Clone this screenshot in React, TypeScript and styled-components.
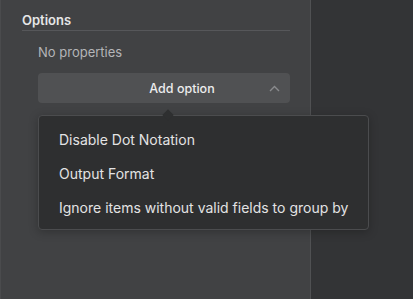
import styled, { createGlobalStyle } from "styled-components";

const GlobalStyle = createGlobalStyle`
  html, body {
    margin: 0;
    padding: 0;
    background: #333436;
  }
  body {
    font-family: Inter, "Open Sans", sans-serif;
    -webkit-font-smoothing: antialiased;
  }
`;

const Screen = styled.div`
  display: flex;
  width: 413px;
  height: 299px;
  overflow: hidden;
  background: #333436;
`;

const Panel = styled.aside`
  position: relative;
  box-sizing: border-box;
  width: 311px;
  height: 100%;
  padding: 13px 20px 0 21px;
  background: #414244;
  border-left: 1px solid #4a4b4d;
  border-right: 1px solid #505153;
`;

const SectionTitle = styled.h3`
  margin: 0;
  padding-bottom: 2px;
  border-bottom: 1px solid #56575a;
  font-size: 13px;
  font-weight: 600;
  line-height: 15px;
  color: #e6e6e7;
`;

const Body = styled.div`
  display: flex;
  flex-direction: column;
  gap: 13px;
  padding: 13px 0 0 16px;
`;

const EmptyText = styled.div`
  font-size: 13px;
  line-height: 16px;
  color: #b4b5b8;
`;

const AddButton = styled.button`
  position: relative;
  display: flex;
  align-items: center;
  justify-content: center;
  height: 30px;
  padding: 0 0 0 36px;
  border: 0;
  border-radius: 4px;
  background: #505153;
  font-family: inherit;
  font-size: 12.5px;
  font-weight: 500;
  color: #ececed;

  svg {
    position: absolute;
    right: 10px;
    top: 12px;
  }
`;

const Popover = styled.div`
  position: absolute;
  top: 115px;
  left: 37px;
  box-sizing: border-box;
  width: 331px;
  height: 115px;
  padding: 6px 0;
  background: #2e2f30;
  border: 1px solid #4b4c4e;
  border-radius: 4px;
  box-shadow: 0 2px 10px rgba(0, 0, 0, 0.25);

  &::before {
    content: "";
    position: absolute;
    top: -5px;
    left: 125px;
    width: 8px;
    height: 8px;
    background: #2e2f30;
    transform: rotate(45deg);
  }
`;

const MenuItem = styled.div`
  display: flex;
  align-items: center;
  height: 34px;
  padding: 0 20px;
  font-size: 14px;
  color: #e3e3e4;
  white-space: nowrap;
`;

const options = [
  "Disable Dot Notation",
  "Output Format",
  "Ignore items without valid fields to group by",
];

const ChevronUp: React.FC = () => (
  <svg width="11" height="7" viewBox="0 0 11 7" fill="none">
    <path d="M1 6L5.5 1.5L10 6" stroke="#8a8b8e" strokeWidth="1.4" />
  </svg>
);

const App: React.FC = () => {
  return (
    <>
      <GlobalStyle />
      <Screen>
        <Panel>
          <SectionTitle>Options</SectionTitle>
          <Body>
            <EmptyText>No properties</EmptyText>
            <AddButton>
              Add option
              <ChevronUp />
            </AddButton>
          </Body>
          <Popover>
            {options.map((option) => (
              <MenuItem key={option}>{option}</MenuItem>
            ))}
          </Popover>
        </Panel>
      </Screen>
    </>
  );
};

export default App;
